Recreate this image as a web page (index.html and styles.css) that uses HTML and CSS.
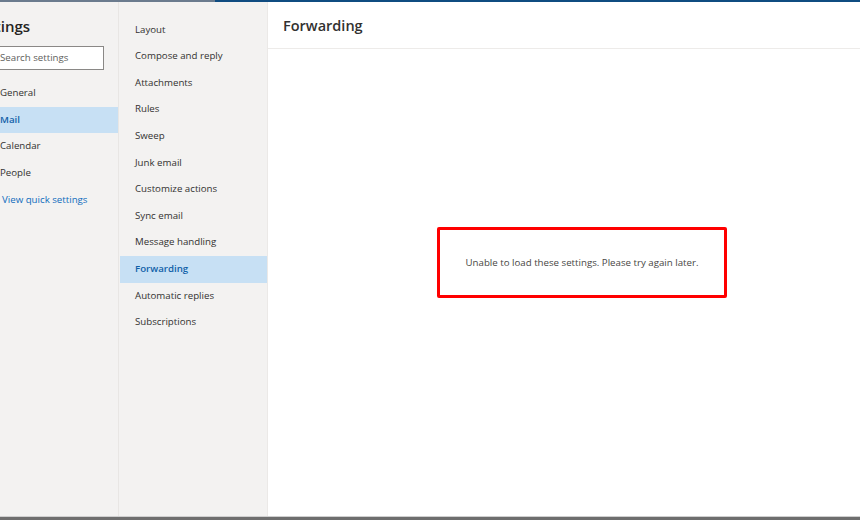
FILE: index.html
```html
<!DOCTYPE html>
<html lang="en">
<head>
	<meta charset="UTF-8">
	<title>Settings</title>
	<link rel="stylesheet" href="styles.css">
</head>
<body>
	<div class="topbar">
		<div class="tb-left"></div>
		<div class="tb-right"></div>
	</div>
	<div class="main">
		<div class="col-settings">
			<div class="inner">
				<h1>Settings</h1>
				<div class="search">Search settings</div>
				<ul class="cats">
					<li>General</li>
					<li class="active">Mail</li>
					<li>Calendar</li>
					<li>People</li>
				</ul>
				<a href="#" class="quick">View quick settings</a>
			</div>
		</div>
		<div class="col-mail">
			<ul class="subs">
				<li>Layout</li>
				<li>Compose and reply</li>
				<li>Attachments</li>
				<li>Rules</li>
				<li>Sweep</li>
				<li>Junk email</li>
				<li>Customize actions</li>
				<li>Sync email</li>
				<li>Message handling</li>
				<li class="active">Forwarding</li>
				<li>Automatic replies</li>
				<li>Subscriptions</li>
			</ul>
		</div>
		<div class="content">
			<div class="header">Forwarding</div>
			<div class="msg">Unable to load these settings. Please try again later.</div>
		</div>
	</div>
	<div class="bottombar"></div>
</body>
</html>
```

FILE: styles.css
```css
*{
	margin: 0;
	padding: 0;
	box-sizing: border-box;
}
body{
	width: 860px;
	height: 520px;
	overflow: hidden;
	font-family: "Open Sans", "Noto Sans", sans-serif;
	font-size: 9.7px;
	color: #323130;
	background: #fff;
}
a{
	text-decoration: none;
}
ul{
	list-style: none;
}
.topbar{
	display: flex;
	height: 2px;
}
.tb-left{
	width: 215px;
	background: #6b7b8e;
}
.tb-right{
	flex: 1;
	background: #0f4c81;
}
.main{
	display: flex;
	height: 514px;
}
.col-settings{
	width: 119px;
	background: #f3f2f1;
	border-right: 1px solid #e8e6e4;
	overflow: hidden;
}
.col-settings .inner{
	width: 150px;
	margin-left: -32px;
}
.col-settings h1{
	font-size: 15px;
	font-weight: 600;
	line-height: 24px;
	margin-top: 12px;
	padding-left: 4px;
	color: #252423;
}
.search{
	width: 112px;
	height: 24px;
	margin: 8px 0 10px 24px;
	padding-left: 7px;
	line-height: 22px;
	background: #fff;
	border: 1px solid #8a8886;
	color: #605e5c;
}
.cats li{
	height: 26.6px;
	line-height: 26.6px;
	padding-left: 32px;
}
.cats li.active,
.subs li.active{
	background: #c7e0f4;
	color: #1161a8;
	font-weight: 600;
}
.quick{
	display: block;
	height: 26px;
	line-height: 26px;
	padding-left: 34px;
	margin-top: 1px;
	color: #0f6cbd;
}
.col-mail{
	width: 149px;
	background: #f3f2f1;
	border-right: 1px solid #ebe9e7;
	padding: 14.7px 0 0 1px;
}
.subs li{
	height: 26.6px;
	line-height: 26.6px;
	padding-left: 15px;
}
.content{
	flex: 1;
}
.header{
	height: 47px;
	line-height: 47px;
	padding-left: 15px;
	font-size: 14.5px;
	font-weight: 600;
	color: #323130;
	border-bottom: 1px solid #edebe9;
}
.msg{
	width: 290px;
	height: 71px;
	margin: 178px 0 0 169px;
	border: 3px solid #ff0000;
	border-radius: 2px;
	line-height: 65px;
	text-align: center;
	color: #484644;
}
.bottombar{
	height: 4px;
	border-top: 1px solid #cfcfcf;
	background: #6e6e6e;
}
```
